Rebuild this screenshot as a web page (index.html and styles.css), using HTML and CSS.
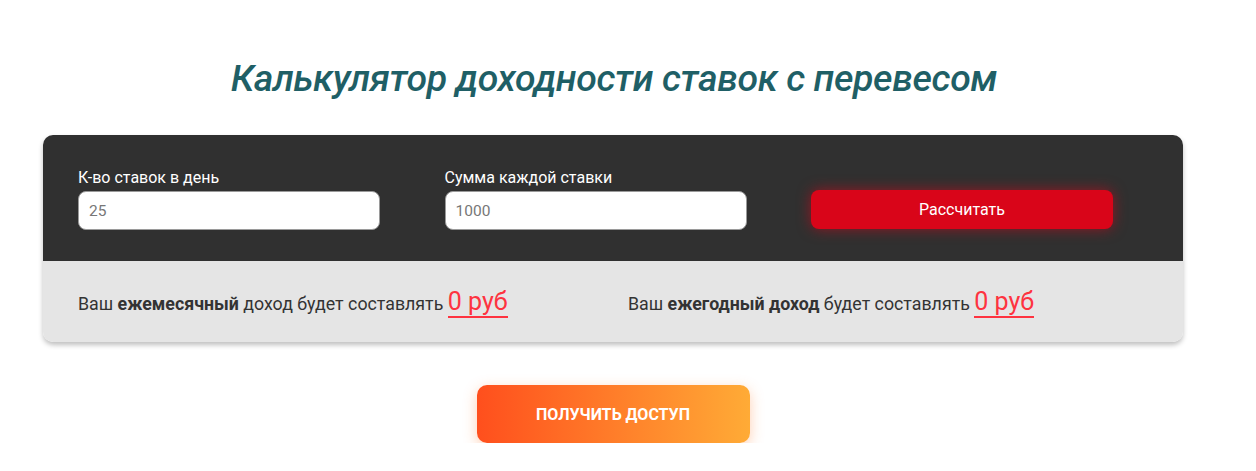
FILE: index.html
```html
<!DOCTYPE html>
<html lang="ru">
<head>
<meta charset="utf-8">
<title>Калькулятор доходности</title>
<link rel="stylesheet" href="styles.css">
</head>
<body>
<main class="page">
  <h1 class="title">Калькулятор доходности ставок с перевесом</h1>
  <section class="calc">
    <div class="calc-top">
      <div class="field">
        <label class="label">К-во ставок в день</label>
        <input class="input" type="text" placeholder="25">
      </div>
      <div class="field">
        <label class="label">Сумма каждой ставки</label>
        <input class="input" type="text" placeholder="1000">
      </div>
      <div class="field field-btn">
        <button class="calc-btn">Рассчитать</button>
      </div>
    </div>
    <div class="calc-bottom">
      <p class="result">Ваш <b>ежемесячный</b> доход будет составлять <span class="value">0 руб</span></p>
      <p class="result">Ваш <b>ежегодный доход</b> будет составлять <span class="value">0 руб</span></p>
    </div>
  </section>
  <div class="cta-wrap">
    <a class="cta" href="#">Получить доступ</a>
  </div>
</main>
</body>
</html>
```
FILE: styles.css
```css
* { box-sizing: border-box; }
html, body { margin: 0; padding: 0; background: #fff; }
body { font-family: Roboto, "Noto Sans", Arial, sans-serif; }
.page {
  width: 1140px;
  margin-left: 43px;
  padding-top: 52px;
}
.title {
  margin: 0;
  text-align: center;
  font-size: 37.5px;
  font-style: italic;
  font-weight: 500;
  color: #1f5f66;
  line-height: 52px;
  letter-spacing: -0.4px;
  padding-left: 2px;
}
.calc {
  margin-top: 31px;
  border-radius: 10px;
  overflow: hidden;
  box-shadow: 0 3px 5px rgba(0,0,0,0.25);
}
.calc-top {
  background: #303030;
  padding: 33px 35px 30px;
  display: grid;
  grid-template-columns: 302px 302px 302px;
  column-gap: 64.5px;
  height: 126px;
}
.field { display: flex; flex-direction: column; }
.field-btn { justify-content: flex-end; padding-bottom: 2px; }
.label {
  color: #fff;
  font-size: 16px;
  font-weight: 400;
  line-height: 20px;
  margin-bottom: 3px;
}
.input {
  height: 39px;
  border: 1px solid #9a9a9a;
  border-radius: 8px;
  background: #fff;
  padding: 0 10px;
  font-family: inherit;
  font-size: 15.5px;
  color: #333;
}
.input::placeholder { color: #777; }
.calc-btn {
  height: 39px;
  width: 302px;
  border: none;
  border-radius: 8px;
  background: #d90519;
  color: #fff;
  font-family: inherit;
  font-size: 16px;
  box-shadow: 0 0 14px rgba(217,5,25,0.6);
  cursor: pointer;
}
.calc-bottom {
  background: #e5e5e5;
  height: 81px;
  padding: 4px 35px 0;
  display: grid;
  grid-template-columns: 550px 1fr;
  align-items: center;
}
.result {
  margin: 0;
  font-size: 17.8px;
  color: #333;
  padding-bottom: 0;
}
.result b { font-weight: 700; }
.value {
  font-size: 25px;
  color: #fe3340;
  border-bottom: 2px solid #fe3340;
  display: inline-block;
  line-height: 26px;
  padding-bottom: 1px;
}
.cta-wrap {
  display: flex;
  justify-content: center;
  margin-top: 43px;
}
.cta {
  width: 273px;
  height: 58px;
  border-radius: 10px;
  background: linear-gradient(90deg, #ff4f1d 0%, #ffab36 100%);
  color: #fff;
  font-weight: 700;
  font-size: 16px;
  text-transform: uppercase;
  text-decoration: none;
  display: flex;
  align-items: center;
  justify-content: center;
  box-shadow: 0 4px 14px rgba(255,120,40,0.35);
}
```
